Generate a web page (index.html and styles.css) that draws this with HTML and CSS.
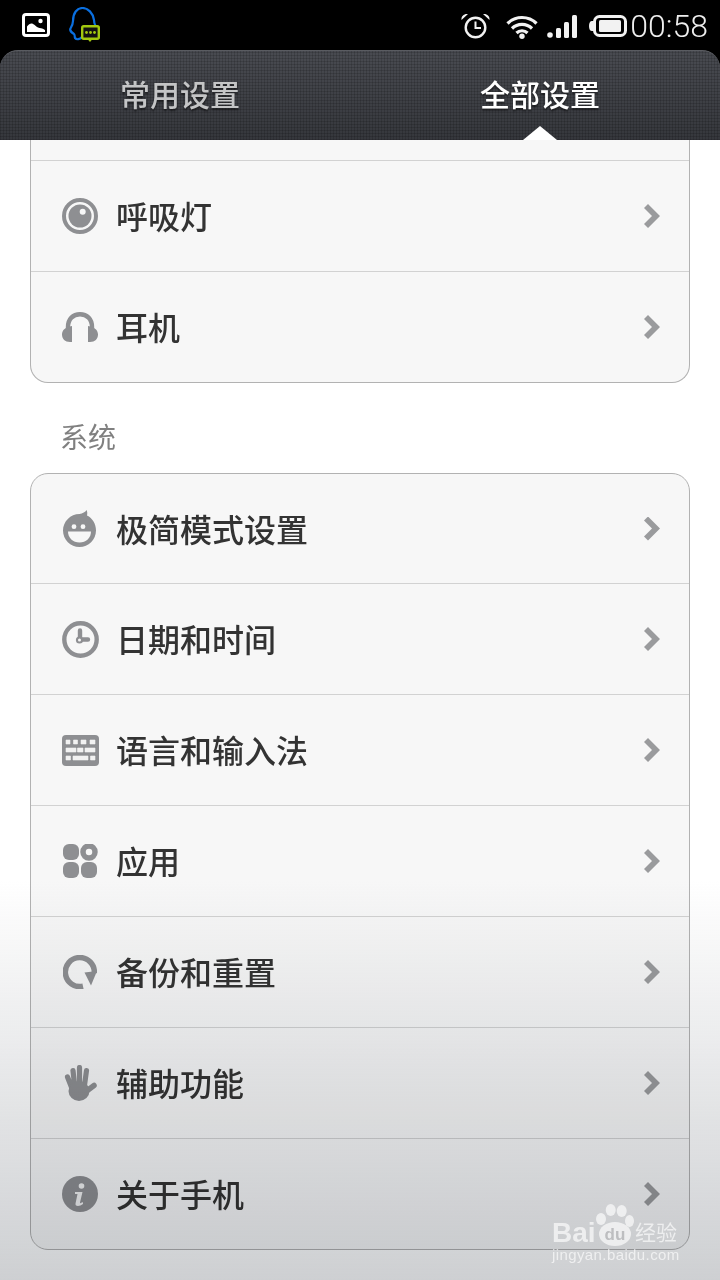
FILE: index.html
```html
<!DOCTYPE html>
<html lang="zh-CN">
<head>
  <meta charset="UTF-8">
  <meta name="viewport" content="width=device-width, initial-scale=1">
  <title>全部设置</title>
  <link rel="stylesheet" href="styles.css">
</head>
<body>

  <div class="screen">
    <!-- Status bar -->
    <div class="status-bar">
      <div class="status-left">
        <svg class="ic-picture" width="28" height="24" viewBox="0 0 28 24">
          <rect x="1.500" y="1.500" width="25" height="21" rx="2.500" fill="none" stroke="#fff" stroke-width="3"/>
          <path d="M5 19v-5.500c2-2.500 4-3.500 6-2.500 2 1 3 2.500 5 3.500 2 .7 4 .5 7 2.500v2z" fill="#fff"/>
          <circle cx="18.500" cy="8" r="2.200" fill="#fff"/>
        </svg>
        <svg class="ic-qq" width="31" height="36" viewBox="0 0 31 36">
          <path d="M13 30c-2 2.500-5.500 3-7 1-.5-1.500 0-3-1-4C2.500 25.500.5 23.500 1.500 21.500 3 19 4 17 4 14 4 6 8 1 13.500 1S24 6 25 13c0 2 .5 4 1.500 6" fill="none" stroke="#0a6fe0" stroke-width="2.200"/>
          <rect x="13.200" y="19.200" width="16.600" height="12.600" rx="1.500" fill="#111" stroke="#a2c80f" stroke-width="2.400"/>
          <path d="M18.500 32h5l-2.500 3z" fill="#a2c80f"/>
          <circle cx="17.500" cy="25.500" r="1.400" fill="#a2c80f"/>
          <circle cx="21.500" cy="25.500" r="1.400" fill="#a2c80f"/>
          <circle cx="25.500" cy="25.500" r="1.400" fill="#a2c80f"/>
        </svg>
      </div>
      <div class="status-right">
        <svg class="ic-alarm" width="29" height="26" viewBox="0 0 29 26">
          <circle cx="14.500" cy="14.500" r="9.800" fill="none" stroke="#f2f2f2" stroke-width="2.400"/>
          <path d="M14.500 8.500v6.500h5.500" fill="none" stroke="#f2f2f2" stroke-width="2"/>
          <path d="M.5 7C0 3 3 .5 7 1zM28.500 7c.5-4-2.500-6.500-6.500-6z" fill="#f2f2f2"/>
        </svg>
        <svg class="ic-wifi" width="32" height="25" viewBox="0 0 32 25">
          <path d="M1.500 9.500C9.500 1.500 22.500 1.500 30.500 9.500M6 14.500C11.500 9 20.500 9 26 14.500M10.500 19C13.500 16 18.500 16 21.500 19" fill="none" stroke="#f2f2f2" stroke-width="3.200"/>
          <circle cx="16" cy="22.300" r="2.700" fill="#f2f2f2"/>
        </svg>
        <svg class="ic-signal" width="30" height="23" viewBox="0 0 30 23">
          <circle cx="3" cy="20" r="2.800" fill="#f2f2f2"/>
          <rect x="9" y="13" width="5" height="10" rx="1.500" fill="#f2f2f2"/>
          <rect x="17" y="7" width="5" height="16" rx="1.500" fill="#f2f2f2"/>
          <rect x="25" y="0" width="5" height="23" rx="1.500" fill="#f2f2f2"/>
        </svg>
        <svg class="ic-battery" width="38" height="22" viewBox="0 0 38 22">
          <path d="M4 6H3C1 6 0 8 0 11s1 5 3 5h1z" fill="#f2f2f2"/>
          <rect x="5.500" y="1.500" width="31" height="19" rx="5" fill="none" stroke="#f2f2f2" stroke-width="3"/>
          <rect x="10" y="5" width="22" height="12" rx="1.500" fill="#f2f2f2"/>
        </svg>
        <span class="clock">00:58</span>
      </div>
    </div>

    <!-- Tabs -->
    <div class="tabs">
      <div class="tab">常用设置</div>
      <div class="tab active">全部设置</div>
    </div>

    <!-- Settings list -->
    <div class="content">
      <div class="card card-cut">
        <div class="row-cut"></div>
        <div class="row">
          <svg class="icon" width="36" height="36" viewBox="0 0 36 36">
            <circle cx="18" cy="18" r="16" fill="none" stroke="#8e8f92" stroke-width="4"/>
            <circle cx="18" cy="18" r="11.500" fill="#8e8f92"/>
            <circle cx="20.700" cy="13.700" r="3" fill="#f7f7f7"/>
          </svg>
          <span class="label">呼吸灯</span>
          <span class="chevron"></span>
        </div>
        <div class="row">
          <svg class="icon" width="36" height="30" viewBox="0 0 36 30">
            <path d="M6 18v-3C6 7 11 2.200 18 2.200S30 7 30 15v3" fill="none" stroke="#8e8f92" stroke-width="4.400"/>
            <path d="M10 14v16H8c-5 0-8-3-8-7.500S3.500 15 10 14zM26 14v16h2c5 0 8-3 8-7.500S32.500 15 26 14z" fill="#8e8f92"/>
          </svg>
          <span class="label">耳机</span>
          <span class="chevron"></span>
        </div>
      </div>

      <div class="section-title">系统</div>

      <div class="card">
        <div class="row">
          <svg class="icon ic-face" width="33" height="37" viewBox="0 0 33 37">
            <path d="M16.500 4c3-.5 6-2 7-4 .8 1.500 1 3.500.5 5.500C29.500 8 33 14 33 20.500 33 29.500 25.500 37 16.500 37S0 29.500 0 20.500 7.500 4 16.500 4z" fill="#8e8f92"/>
            <circle cx="11" cy="16.700" r="2.400" fill="#f7f7f7"/>
            <circle cx="20" cy="16.700" r="2.400" fill="#f7f7f7"/>
            <path d="M5 21.500h23c0 6.500-5 11-11.500 11S5 28 5 21.500z" fill="#f7f7f7"/>
          </svg>
          <span class="label">极简模式设置</span>
          <span class="chevron"></span>
        </div>
        <div class="row">
          <svg class="icon" width="37" height="37" viewBox="0 0 37 37">
            <circle cx="18.500" cy="18.500" r="16.200" fill="none" stroke="#8e8f92" stroke-width="4.400"/>
            <path d="M18 9.500V18.500H26" fill="none" stroke="#8e8f92" stroke-width="4.400" stroke-linecap="round"/>
            <circle cx="17.500" cy="19" r="3.600" fill="#8e8f92"/>
            <circle cx="17.500" cy="19" r="1.500" fill="#f7f7f7"/>
          </svg>
          <span class="label">日期和时间</span>
          <span class="chevron"></span>
        </div>
        <div class="row">
          <svg class="icon" width="37" height="31" viewBox="0 0 37 31">
            <rect width="37" height="31" rx="4" fill="#8e8f92"/>
            <path d="M4 5h4v4H4zM11.500 5h4v4h-4zM19 5h5v4h-5zM28 5h5v4h-5zM4 13h10v4H4zM15.500 13h5.500v4h-5.500zM23 13h10v4H23zM4 21h4.500v4H4zM11 21h15v4H11zM28.500 21h4.500v4h-4.500z" fill="#f2f2f2" stroke="#f2f2f2" stroke-width=".6" stroke-linejoin="round"/>
          </svg>
          <span class="label">语言和输入法</span>
          <span class="chevron"></span>
        </div>
        <div class="row">
          <svg class="icon" width="36" height="34" viewBox="0 0 36 34">
            <rect x="1" y="0" width="16" height="16" rx="6" fill="#8e8f92"/>
            <circle cx="27" cy="8" r="6" fill="none" stroke="#8e8f92" stroke-width="5.500"/>
            <rect x="1" y="18" width="16" height="16" rx="6" fill="#8e8f92"/>
            <rect x="19" y="18" width="16" height="16" rx="6" fill="#8e8f92"/>
          </svg>
          <span class="label">应用</span>
          <span class="chevron"></span>
        </div>
        <div class="row">
          <svg class="icon ic-backup" width="34" height="34" viewBox="0 0 34 34">
            <path d="M20 31.200A14.500 14.500 0 1 1 31.300 18" fill="none" stroke="#8e8f92" stroke-width="5.500"/>
            <path d="M21.500 17.500 34 16 28 30.500z" fill="#8e8f92"/>
          </svg>
          <span class="label">备份和重置</span>
          <span class="chevron"></span>
        </div>
        <div class="row">
          <svg class="icon ic-hand" width="33" height="36" viewBox="0 0 33 36">
            <g stroke="#8e8f92" stroke-linecap="round" fill="none">
              <path d="M3.500 12 9 26M9 5.500 11 24M15.500 2.500V24M22.500 5.500 20 24" stroke-width="5.200"/>
              <path d="M30 20.500 20 28" stroke-width="5.500"/>
            </g>
            <ellipse cx="15" cy="26" rx="10.500" ry="10" fill="#8e8f92"/>
          </svg>
          <span class="label">辅助功能</span>
          <span class="chevron"></span>
        </div>
        <div class="row">
          <svg class="icon" width="36" height="36" viewBox="0 0 36 36">
            <circle cx="18" cy="18" r="18" fill="#8e8f92"/>
            <circle cx="19.500" cy="10" r="2.800" fill="#f2f2f2"/>
            <path d="M13 16h7.500l-2.500 10.500c0 1 1 1 3-.5v2c-3 2.500-8 3-7.500-.5l2-9.500H13z" fill="#f2f2f2"/>
          </svg>
          <span class="label">关于手机</span>
          <span class="chevron"></span>
        </div>
      </div>
    </div>

    <!-- Grey fade over the bottom of the page -->
    <div class="fade"></div>

    <!-- Baidu watermark -->
    <div class="watermark">
      <div class="wm-top">
        <span class="wm-bai">Bai</span>
        <svg class="wm-paw" width="38" height="42" viewBox="0 0 38 42">
          <ellipse cx="14.700" cy="6" rx="5" ry="6"/>
          <ellipse cx="25.700" cy="7" rx="5" ry="6"/>
          <ellipse cx="5" cy="15" rx="5" ry="6"/>
          <ellipse cx="33.500" cy="17" rx="4.500" ry="6"/>
          <ellipse cx="19" cy="30" rx="16" ry="12"/>
          <text class="wm-du" x="19" y="36" text-anchor="middle">du</text>
        </svg>
        <span class="wm-jy">经验</span>
      </div>
      <div class="wm-url">jingyan.baidu.com</div>
    </div>
  </div>

</body>
</html>
```

FILE: styles.css
```css
/* Basic Reset */
* {
  box-sizing: border-box;
  margin: 0;
  padding: 0;
}

body {
  font-family: "Noto Sans CJK SC", "Noto Sans", sans-serif;
  background-color: #000;
}

.screen {
  position: relative;
  display: flex;
  flex-direction: column;
  width: 720px;
  height: 1280px;
  overflow: hidden;
  background-color: #000;
}

/* Status bar */
.status-bar {
  display: flex;
  flex: none;
  justify-content: space-between;
  align-items: center;
  height: 50px;
  padding: 2px 12px 0 22px;
  background-color: #000;
}

.status-left {
  display: flex;
  align-items: center;
  gap: 19px;
  margin-top: -2px;
}

.status-right {
  display: flex;
  align-items: center;
}

.ic-wifi {
  margin-left: 16px;
}

.ic-signal {
  margin-left: 9px;
}

.ic-battery {
  margin-left: 12px;
}

.clock {
  margin-left: 3px;
  font-family: Roboto, sans-serif;
  font-weight: 300;
  font-size: 32px;
  line-height: 48px;
  color: #eee;
}

/* Tabs */
.tabs {
  position: relative;
  display: flex;
  flex: none;
  height: 90px;
  border-top: 1px solid #5a5c61;
  border-radius: 18px 18px 0 0;
  background-color: #3a3c42;
  background-image:
    repeating-linear-gradient(90deg, rgba(0, 0, 0, 0.14) 0 1px, transparent 1px 3px),
    repeating-linear-gradient(0deg, rgba(0, 0, 0, 0.14) 0 1px, transparent 1px 3px),
    linear-gradient(#494b51, #35373c);
}

.tab {
  flex: 1;
  text-align: center;
  font-size: 30px;
  font-weight: 500;
  line-height: 84px;
  color: #c4c5c6;
  text-shadow: 0 2px 2px rgba(0, 0, 0, 0.5);
}

.tab.active {
  color: #fff;
}

.tab.active::after {
  content: "";
  position: absolute;
  left: 523px;
  bottom: 0;
  width: 34px;
  height: 14px;
  background-color: #fff;
  clip-path: polygon(50% 0, 100% 100%, 0 100%);
}

/* Settings list */
.content {
  flex: 1;
  overflow: hidden;
  background-color: #fff;
}

.card {
  margin: 0 30px;
  border: 1px solid #b2b2b2;
  border-radius: 18px;
  background-color: #f7f7f7;
}

.card-cut {
  border-top: none;
  border-radius: 0 0 18px 18px;
}

.row-cut {
  height: 20px;
}

.row {
  display: grid;
  grid-template-columns: 54px 1fr auto;
  align-items: center;
  height: 111px;
  padding: 0 29px 0 31px;
  border-top: 1px solid #d2d2d2;
}

.card > .row:first-child {
  height: 109px;
  border-top: none;
}

.ic-face,
.ic-backup {
  margin-left: 1px;
}

.ic-hand {
  margin-left: 2px;
}

.label {
  margin-top: -2px;
  font-size: 32px;
  font-weight: 500;
  color: #333;
}

.chevron {
  width: 16px;
  height: 24px;
  background-color: #9a9b9d;
  clip-path: polygon(4px 0, 16px 12px, 4px 24px, 0 20px, 8px 12px, 0 4px);
}

.section-title {
  height: 90px;
  padding-top: 35px;
  padding-left: 60px;
  font-size: 28px;
  line-height: 36px;
  color: #808080;
}

/* Grey fade */
.fade {
  position: absolute;
  left: 0;
  right: 0;
  bottom: 0;
  height: 400px;
  background: linear-gradient(rgba(203, 205, 208, 0), rgba(203, 205, 208, 0.95));
  mix-blend-mode: multiply;
  pointer-events: none;
}

/* Watermark */
.watermark {
  position: absolute;
  right: 40px;
  bottom: 16px;
  width: 128px;
  color: rgba(255, 255, 255, 0.65);
}

.wm-top {
  display: flex;
  align-items: flex-end;
  height: 42px;
}

.wm-bai {
  flex: none;
  width: 44px;
  font-family: "Liberation Sans", sans-serif;
  font-weight: 700;
  font-size: 28px;
  line-height: 26px;
}

.wm-paw {
  flex: none;
  fill: rgba(255, 255, 255, 0.65);
}

.wm-du {
  font-family: "Liberation Sans", sans-serif;
  font-weight: 700;
  font-size: 17px;
  fill: #bdbec0;
}

.wm-jy {
  margin-left: 1px;
  margin-bottom: 3px;
  font-size: 21px;
  line-height: 24px;
  white-space: nowrap;
}

.wm-url {
  font-family: "Liberation Sans", sans-serif;
  font-size: 15px;
  line-height: 18px;
  letter-spacing: 0.4px;
  white-space: nowrap;
}
```
